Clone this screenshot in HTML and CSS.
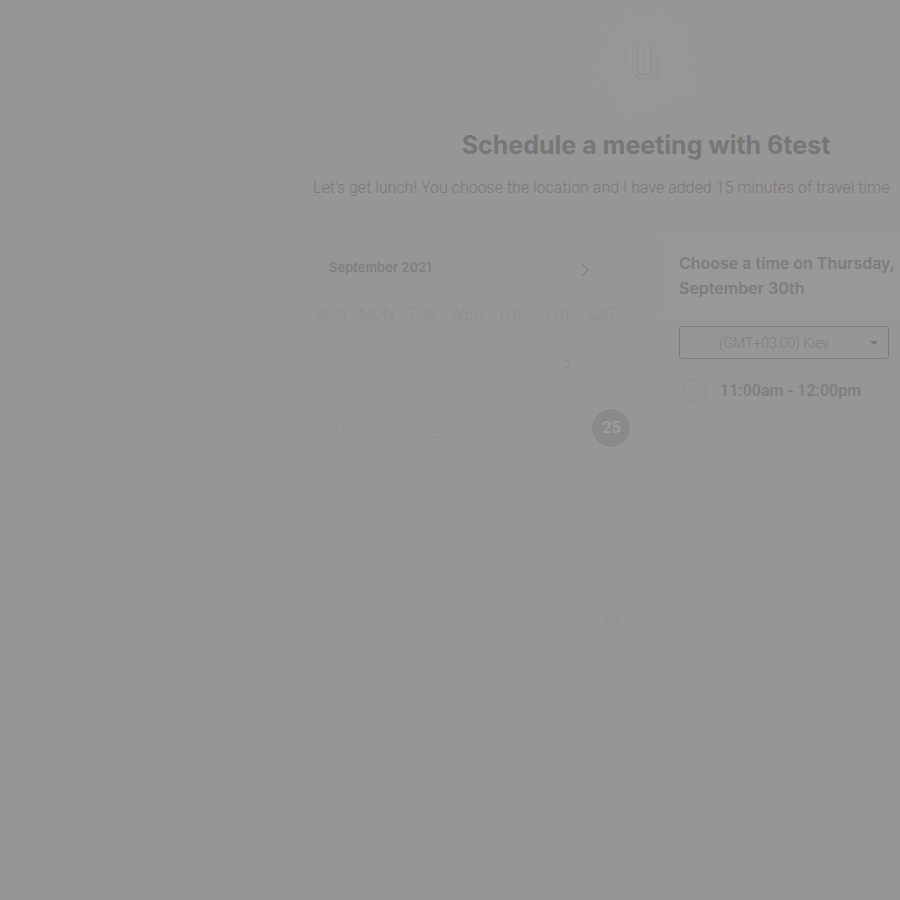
FILE: index.html
```html
<!DOCTYPE html>
<html lang="en">
<head>
<meta charset="utf-8">
<meta name="viewport" content="width=device-width">
<title>Schedule a meeting</title>
<link rel="stylesheet" href="styles.css">
</head>
<body>
<main class="page">
  <header class="intro">
    <svg class="logo" viewBox="0 0 104 104" aria-hidden="true">
      <circle cx="52" cy="52" r="51" fill="#979797" stroke="#9c9c9c"/>
      <circle cx="52" cy="52" r="50" fill="none" stroke="#929292" stroke-dasharray="9 5 17 8"/>
      <path d="M22 25q10-9 25-10M82 25l5 6M14 42v20M23 81l11 8M76 87l9-7" fill="none" stroke="#999"/>
      <path d="M39 36h5v21q0 6 6 6 7 0 7-6V36h8v30h-7v-3q-4 4-9 4-10 0-10-10z" fill="#969696" stroke="#8e8e8e"/>
      <path d="M37 35v22q0 12 12 12M47 37v20q0 3 3 3t4-3V37M66 35v32" fill="none" stroke="#9c9c9c"/>
    </svg>
    <h1>Schedule a meeting with 6test</h1>
    <p>Let's get lunch! You choose the location and I have added 15 minutes of travel time</p>
  </header>
  <div class="columns">
    <section class="calendar">
      <div class="month">
        <h2>September 2021</h2>
        <button class="arrow prev" type="button" aria-label="Previous month"><svg viewBox="0 0 10 14"><path d="M8 1L2 7l6 6"/></svg></button>
        <button class="arrow" type="button" aria-label="Next month"><svg viewBox="0 0 10 14"><path d="M2 1l6 6-6 6"/></svg></button>
      </div>
      <table>
        <thead><tr><th><span>SUN</span></th><th><span>MON</span></th><th><span>TUE</span></th><th><span>WED</span></th><th><span>THU</span></th><th><span>FRI</span></th><th><span>SAT</span></th></tr></thead>
        <tbody>
          <tr><td></td><td></td><td></td><td></td><td></td><td class="seen">5</td><td></td></tr>
          <tr><td>12</td><td></td><td>12</td><td>28</td><td></td><td></td><td><button class="selected" type="button">25</button></td></tr>
          <tr><td></td><td></td><td></td><td></td><td></td><td></td><td></td></tr>
          <tr><td></td><td></td><td></td><td></td><td>5</td><td></td><td></td></tr>
          <tr><td></td><td>12</td><td></td><td></td><td></td><td></td><td>19</td></tr>
        </tbody>
      </table>
    </section>
    <section class="times">
      <h2>Choose a time on Thursday, September 30th</h2>
      <div class="options">
        <div class="zone">
          <select aria-label="Time zone"><option>(GMT+03:00) Kiev</option></select>
          <svg viewBox="0 0 8 4" aria-hidden="true"><path d="M0 0h8L4 4z"/></svg>
        </div>
        <label class="slot"><input type="radio" name="slot">11:00am - 12:00pm</label>
      </div>
    </section>
  </div>
</main>
</body>
</html>
```
FILE: styles.css
```css
* { box-sizing: border-box; }
body {
  margin: 0;
  overflow-x: hidden;
  background: #969696;
  color: #7d7d7d;
  font-family: Roboto, sans-serif;
  font-size: 16px;
}
h1, h2, p { margin: 0; }
h1, h2 { font-family: Inter, sans-serif; }
button { padding: 0; border: 0; background: none; font: inherit; }
.page { width: max-content; padding: 12px 0 0 300px; }
.intro { display: flex; flex-direction: column; align-items: center; }
.logo { width: 104px; height: 104px; }
h1 { margin-top: 12px; font-size: 25px; line-height: 34px; font-weight: 700; color: #777; }
.intro p {
  align-self: flex-start;
  margin-top: 14px;
  padding-left: 13px;
  line-height: 24px;
  font-weight: 300;
  color: #797979;
  white-space: nowrap;
}
.columns { display: flex; gap: 28px; margin-top: 36px; }
.calendar { width: 334px; }
.month { display: flex; align-items: center; height: 62px; padding: 0 12px 0 29px; }
.month h2 { flex: 1; font-size: 13px; font-weight: 600; color: #7f7f7f; }
.arrow { width: 75px; height: 24px; margin-top: 8px; }
.arrow svg { width: 10px; height: 14px; fill: none; stroke: #797979; }
.prev svg { stroke: #909090; }
table { width: 316px; margin-left: 18px; border-collapse: collapse; table-layout: fixed; color: #929292; }
th, td { padding: 0; font-weight: 300; text-align: center; }
th { height: 32px; color: #8e8e8e; }
th span { display: inline-block; margin-left: -18px; }
td { height: 65px; }
.seen { color: #8d8d8d; }
.selected {
  width: 40px;
  height: 40px;
  border: 1px solid #9b9b9b;
  border-radius: 50%;
  background: #8a8a8a;
  color: #9d9d9d;
  font-weight: 700;
}
.times { width: 330px; }
.times h2 {
  min-height: 80px;
  padding: 15px 17px;
  border-radius: 4px;
  background: #989898;
  font-size: 16px;
  line-height: 25px;
  font-weight: 600;
  max-width: 262px;
  box-shadow: 68px 0 #989898;
}
.options { padding: 10px 17px; }
.zone { display: grid; width: 210px; align-items: center; }
.zone > * { grid-area: 1 / 1; }
.zone select {
  width: 100%;
  height: 33px;
  padding: 0 18px 0 39px;
  border: 1px solid #7c7c7c;
  border-radius: 3px;
  appearance: none;
  background: transparent;
  color: #7e7e7e;
  font: 300 14px Roboto, sans-serif;
}
.zone svg { width: 8px; height: 4px; margin-right: 11px; justify-self: end; fill: #777; pointer-events: none; }
.slot { display: flex; align-items: center; gap: 13px; margin-top: 19px; padding-left: 4px; font-weight: 600; color: #7f7f7f; }
.slot input { width: 24px; height: 24px; margin: 0; appearance: none; border: 1px solid #8e8e8e; border-radius: 50%; }
```
